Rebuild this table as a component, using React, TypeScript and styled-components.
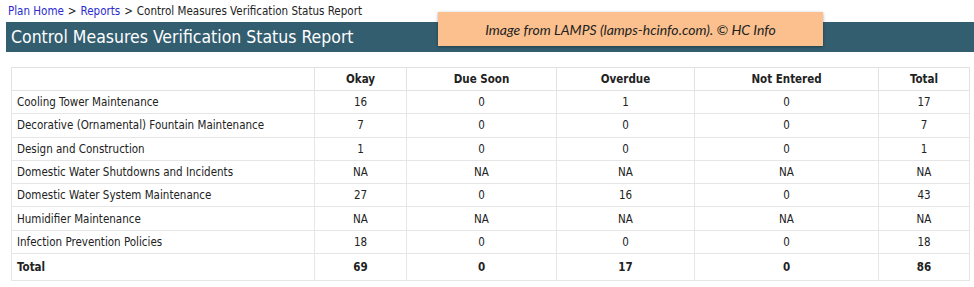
import React from 'react'
import styled, { createGlobalStyle } from 'styled-components'

const GlobalStyle = createGlobalStyle`
  html, body {
    margin: 0;
    padding: 0;
    background: #ffffff;
  }
  body {
    font-family: "DejaVu Sans Condensed", "DejaVu Sans", sans-serif;
    color: #222222;
  }
`

type Row = {
  name: string
  okay: string
  dueSoon: string
  overdue: string
  notEntered: string
  total: string
}

const rows: Row[] = [
  { name: 'Cooling Tower Maintenance', okay: '16', dueSoon: '0', overdue: '1', notEntered: '0', total: '17' },
  { name: 'Decorative (Ornamental) Fountain Maintenance', okay: '7', dueSoon: '0', overdue: '0', notEntered: '0', total: '7' },
  { name: 'Design and Construction', okay: '1', dueSoon: '0', overdue: '0', notEntered: '0', total: '1' },
  { name: 'Domestic Water Shutdowns and Incidents', okay: 'NA', dueSoon: 'NA', overdue: 'NA', notEntered: 'NA', total: 'NA' },
  { name: 'Domestic Water System Maintenance', okay: '27', dueSoon: '0', overdue: '16', notEntered: '0', total: '43' },
  { name: 'Humidifier Maintenance', okay: 'NA', dueSoon: 'NA', overdue: 'NA', notEntered: 'NA', total: 'NA' },
  { name: 'Infection Prevention Policies', okay: '18', dueSoon: '0', overdue: '0', notEntered: '0', total: '18' },
]

const totals: Row = { name: 'Total', okay: '69', dueSoon: '0', overdue: '17', notEntered: '0', total: '86' }

const colWidths = [303, 92, 150, 138, 184, 91]

export default function App() {
  return (
    <Page>
      <GlobalStyle />
      <Breadcrumb>
        <CrumbLink href="#">Plan Home</CrumbLink>
        <Sep>&gt;</Sep>
        <CrumbLink href="#">Reports</CrumbLink>
        <Sep>&gt;</Sep>
        <span>Control Measures Verification Status Report</span>
      </Breadcrumb>

      <TitleBar>
        <Title>Control Measures Verification Status Report</Title>
      </TitleBar>

      <Credit>Image from LAMPS (lamps-hcinfo.com). © HC Info</Credit>

      <TableWrap>
        <ReportTable>
          <colgroup>
            {colWidths.map((w, i) => (
              <col key={i} style={{ width: w }} />
            ))}
          </colgroup>
          <thead>
            <tr>
              <HeadCell />
              <HeadCell>Okay</HeadCell>
              <HeadCell>Due Soon</HeadCell>
              <HeadCell>Overdue</HeadCell>
              <HeadCell>Not Entered</HeadCell>
              <HeadCell>Total</HeadCell>
            </tr>
          </thead>
          <tbody>
            {rows.map((r) => (
              <tr key={r.name}>
                <NameCell>{r.name}</NameCell>
                <NumCell>{r.okay}</NumCell>
                <NumCell>{r.dueSoon}</NumCell>
                <NumCell>{r.overdue}</NumCell>
                <NumCell>{r.notEntered}</NumCell>
                <NumCell>{r.total}</NumCell>
              </tr>
            ))}
            <TotalRow>
              <NameCell $bold>{totals.name}</NameCell>
              <NumCell $bold>{totals.okay}</NumCell>
              <NumCell $bold>{totals.dueSoon}</NumCell>
              <NumCell $bold>{totals.overdue}</NumCell>
              <NumCell $bold>{totals.notEntered}</NumCell>
              <NumCell $bold>{totals.total}</NumCell>
            </TotalRow>
          </tbody>
        </ReportTable>
      </TableWrap>
    </Page>
  )
}

const Page = styled.div`
  position: relative;
  width: 974px;
  height: 287px;
  overflow: hidden;
`

const Breadcrumb = styled.div`
  padding: 4px 0 0 8px;
  height: 18px;
  font-size: 11.5px;
  line-height: 14px;
  color: #222222;
`

const CrumbLink = styled.a`
  color: #2a2ad0;
  text-decoration: none;
`

const Sep = styled.span`
  margin: 0 4px;
`

const TitleBar = styled.div`
  margin-left: 6px;
  height: 30px;
  background: #335e70;
  display: flex;
  align-items: center;
  padding-left: 5px;
`

const Title = styled.h1`
  margin: 0;
  font-size: 17.5px;
  font-weight: normal;
  color: #ffffff;
  line-height: 30px;
`

const Credit = styled.div`
  position: absolute;
  left: 438px;
  top: 12px;
  width: 385px;
  height: 34px;
  background: #fbc08e;
  box-shadow: 0 1px 3px rgba(0, 0, 0, 0.35);
  display: flex;
  align-items: center;
  justify-content: center;
  font-family: Lato, "Open Sans", sans-serif;
  font-style: italic;
  font-size: 14px;
  color: #222222;
`

const TableWrap = styled.div`
  padding: 15px 0 0 11px;
`

const ReportTable = styled.table`
  table-layout: fixed;
  width: 958px;
  border-collapse: collapse;
  border: 1px solid #e2e2e2;
  font-size: 11.5px;
  line-height: 14px;
`

const HeadCell = styled.th`
  height: 22px;
  padding: 0 6px;
  border: 1px solid #e2e2e2;
  font-weight: bold;
  text-align: center;
`

const NameCell = styled.td<{ $bold?: boolean }>`
  height: 22.3px;
  padding: 0 5px;
  border: 1px solid #e6e6e6;
  text-align: left;
  font-weight: ${(p) => (p.$bold ? 'bold' : 'normal')};
`

const NumCell = styled.td<{ $bold?: boolean }>`
  height: 22.3px;
  padding: 0;
  border: 1px solid #e6e6e6;
  text-align: center;
  font-weight: ${(p) => (p.$bold ? 'bold' : 'normal')};
`

const TotalRow = styled.tr`
  td {
    height: 26px;
  }
`
